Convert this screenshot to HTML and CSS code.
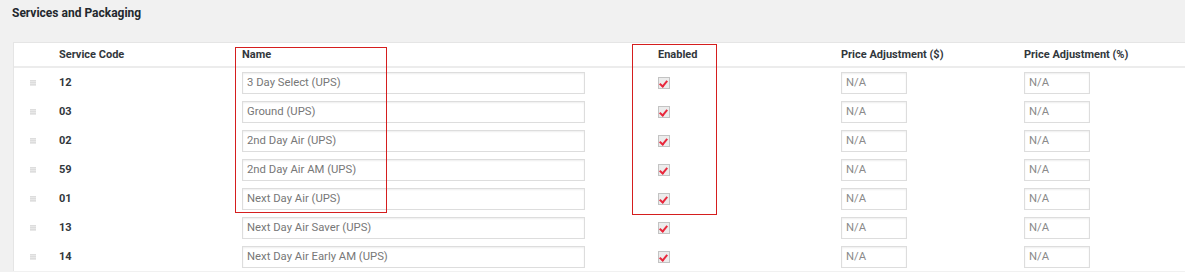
FILE: index.html
```html
<!DOCTYPE html>
<html lang="en">

<head>
  <meta charset="UTF-8">
  <title>Services and Packaging</title>
  <link rel="stylesheet" href="styles.css">
</head>

<body>
  <h2 class="title">Services and Packaging</h2>

  <div class="panel">
    <div class="row head">
      <span></span>
      <span>Service Code</span>
      <span>Name</span>
      <span>Enabled</span>
      <span>Price Adjustment ($)</span>
      <span>Price Adjustment (%)</span>
    </div>

    <div class="row">
      <i class="grip"></i>
      <b>12</b>
      <span><input class="name" type="text" value="3 Day Select (UPS)"></span>
      <span><i class="check"></i></span>
      <span><input class="adj" type="text" placeholder="N/A"></span>
      <span><input class="adj" type="text" placeholder="N/A"></span>
    </div>

    <div class="row">
      <i class="grip"></i>
      <b>03</b>
      <span><input class="name" type="text" value="Ground (UPS)"></span>
      <span><i class="check"></i></span>
      <span><input class="adj" type="text" placeholder="N/A"></span>
      <span><input class="adj" type="text" placeholder="N/A"></span>
    </div>

    <div class="row">
      <i class="grip"></i>
      <b>02</b>
      <span><input class="name" type="text" value="2nd Day Air (UPS)"></span>
      <span><i class="check"></i></span>
      <span><input class="adj" type="text" placeholder="N/A"></span>
      <span><input class="adj" type="text" placeholder="N/A"></span>
    </div>

    <div class="row">
      <i class="grip"></i>
      <b>59</b>
      <span><input class="name" type="text" value="2nd Day Air AM (UPS)"></span>
      <span><i class="check"></i></span>
      <span><input class="adj" type="text" placeholder="N/A"></span>
      <span><input class="adj" type="text" placeholder="N/A"></span>
    </div>

    <div class="row">
      <i class="grip"></i>
      <b>01</b>
      <span><input class="name" type="text" value="Next Day Air (UPS)"></span>
      <span><i class="check"></i></span>
      <span><input class="adj" type="text" placeholder="N/A"></span>
      <span><input class="adj" type="text" placeholder="N/A"></span>
    </div>

    <div class="row">
      <i class="grip"></i>
      <b>13</b>
      <span><input class="name" type="text" value="Next Day Air Saver (UPS)"></span>
      <span><i class="check"></i></span>
      <span><input class="adj" type="text" placeholder="N/A"></span>
      <span><input class="adj" type="text" placeholder="N/A"></span>
    </div>

    <div class="row">
      <i class="grip"></i>
      <b>14</b>
      <span><input class="name" type="text" value="Next Day Air Early AM (UPS)"></span>
      <span><i class="check"></i></span>
      <span><input class="adj" type="text" placeholder="N/A"></span>
      <span><input class="adj" type="text" placeholder="N/A"></span>
    </div>

    <!-- annotation boxes drawn over the table -->
    <div class="mark mark-name"></div>
    <div class="mark mark-enabled"></div>
  </div>
</body>

</html>
```

FILE: styles.css
```css
:root {
  --text: #333;
  --muted: #777;
  --line: #e5e5e5;
  --red: #d51e1e;
}

body {
  margin: 0;
  padding: 0 0 0 13px;
  font-family: Roboto, "Liberation Sans", sans-serif;
  font-size: 11px;
  color: var(--text);
  background: #f1f1f1;
  overflow: hidden;
}

.title {
  margin: 0;
  padding: 6px 0 0 0;
  margin-inline-start: -1px;
  font-size: 12px;
  font-weight: 700;
  color: #23282d;
  block-size: 42px;
  box-sizing: border-box;
}

.panel {
  position: relative;
  background: #fff;
  border-block-start: 1px solid var(--line);
  border-inline-start: 1px solid var(--line);
}

.row {
  display: grid;
  grid-template-columns: 35px 183px 416px 183px 183px 1fr;
  align-items: center;
  block-size: 29px;
}

.row > * {
  padding-inline-start: 10px;
}

.row.head {
  block-size: 23px;
  border-block-end: 2px solid #ececec;
  font-weight: 700;
  color: #32373c;
}

.row b {
  font-weight: 700;
  color: #32373c;
}

.row .grip {
  display: block;
  inline-size: 6px;
  block-size: 6px;
  margin-inline-start: 16px;
  padding: 0;
  background: repeating-linear-gradient(180deg, #ddd 0 1px, #e8e8e8 1px 2px);
}

input {
  box-sizing: border-box;
  display: block;
  block-size: 22px;
  padding: 0 4px;
  font: inherit;
  font-size: 11.3px;
  color: var(--muted);
  border: 1px solid #ddd;
  border-radius: 0;
  box-shadow: inset 0 1px 2px rgba(0, 0, 0, 0.07);
  background: #fff;
}

input::placeholder {
  color: #8a8a8a;
}

.name {
  inline-size: 343px;
}

.adj {
  inline-size: 66px;
}

.row .check {
  display: block;
  position: relative;
  box-sizing: border-box;
  inline-size: 12px;
  block-size: 12px;
  padding: 0;
  border: 1px solid #c3c3c3;
  background: #ececec;
}

.check::after {
  content: "";
  position: absolute;
  left: 2px;
  top: 1px;
  inline-size: 3px;
  block-size: 6px;
  border: solid #e8283c;
  border-width: 0 2px 2px 0;
  transform: rotate(40deg);
}

.mark {
  position: absolute;
  border: 1px solid var(--red);
  pointer-events: none;
}

.mark-name {
  left: 221px;
  top: 4px;
  inline-size: 150px;
  block-size: 164px;
}

.mark-enabled {
  left: 618px;
  top: 1px;
  inline-size: 83px;
  block-size: 169px;
}
```
